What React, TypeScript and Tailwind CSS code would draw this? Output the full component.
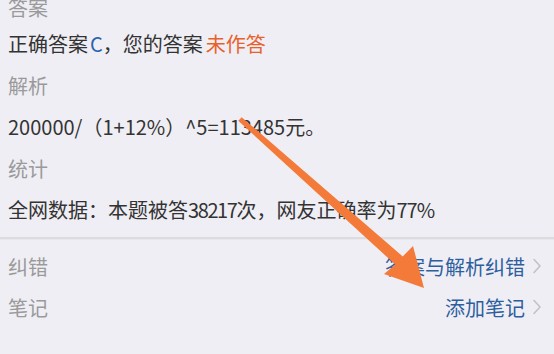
import React from "react";

const Chevron = () => (
  <svg width="10" height="16" viewBox="0 0 10 16" className="ml-[7px] shrink-0">
    <polyline points="2,1.5 8,8 2,14.5" fill="none" stroke="#c2c2c6" strokeWidth="1.6" strokeLinecap="round" strokeLinejoin="round" />
  </svg>
);

export default function App() {
  return (
    <div
      className="relative w-[554px] h-[354px] overflow-hidden bg-[#efeef4] text-[20px]"
      style={{ fontFamily: '"Noto Sans CJK SC", "Noto Sans", sans-serif' }}
    >
      <div className="flex flex-col pl-[8px] mt-[-7px] leading-[41.5px]">
        <div className="text-[#9a9a9a] leading-[30px]">答案</div>
        <div className="text-[#333333]">
          正确答案<span className="text-[#2a62b0] ml-[2px]">C</span>，您的答案<span className="text-[#e8602a] ml-[3px]">未作答</span>
        </div>
        <div className="text-[#9a9a9a]">解析</div>
        <div className="text-[#333333]">200000/（1+12%）^5=113485元。</div>
        <div className="text-[#9a9a9a]">统计</div>
        <div className="text-[#333333]">
          全网数据：本题被答<span className="tracking-[-1.4px]">38217</span>次，网友正确率为<span className="tracking-[-1px]">77%</span>
        </div>
      </div>
      <div className="mt-[6px] h-[2px] bg-[#dcdbe0]" />
      <div className="h-[1px] bg-[#e8e7ec]" />
      <div className="flex flex-col pl-[8px] pr-[12px] mt-[6px] leading-[41px]">
        <div className="flex items-center justify-between">
          <span className="text-[#9a9a9a]">纠错</span>
          <span className="flex items-center text-[#2d5f9f]">
            答案与解析纠错
            <Chevron />
          </span>
        </div>
        <div className="flex items-center justify-between">
          <span className="text-[#9a9a9a]">笔记</span>
          <span className="flex items-center text-[#2d5f9f]">
            添加笔记
            <Chevron />
          </span>
        </div>
      </div>
      <svg
        className="absolute left-0 top-0 pointer-events-none"
        width="554"
        height="354"
        viewBox="0 0 554 354"
      >
        <polygon
          points="238.3,120.8 241.7,117.2 402.7,256.4 413,246 424,288 384,274 395.3,264.6"
          fill="#f47a3a"
        />
      </svg>
    </div>
  );
}
